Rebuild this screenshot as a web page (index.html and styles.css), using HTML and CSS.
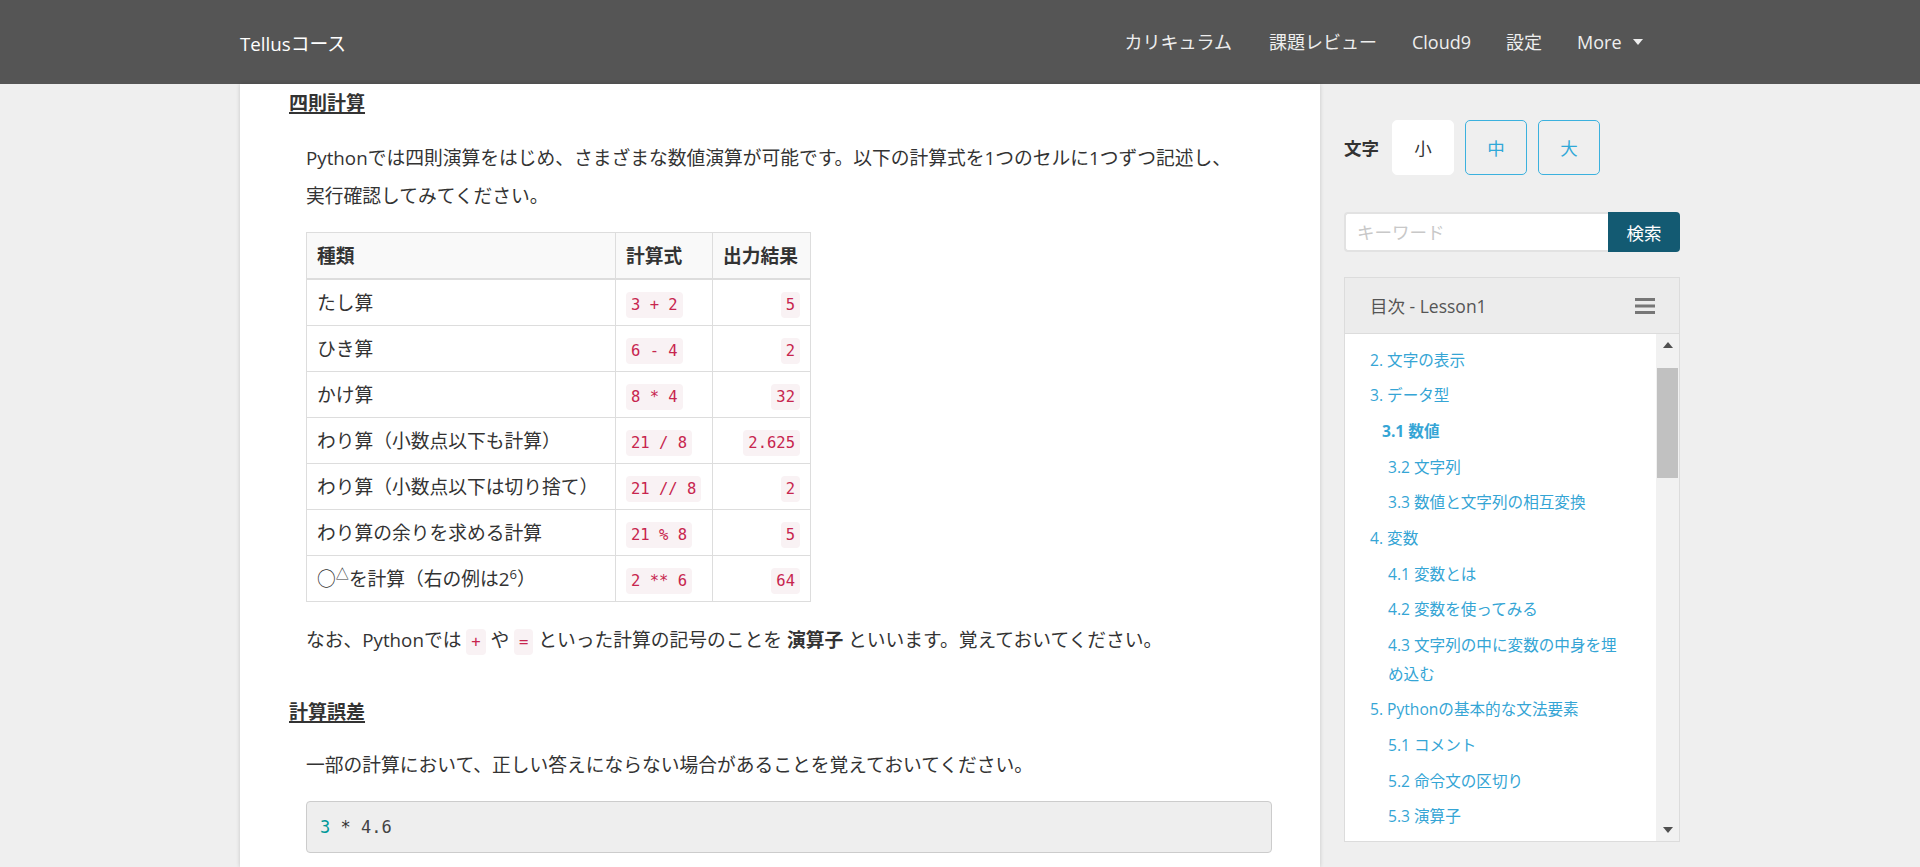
FILE: index.html
```html
<!DOCTYPE html>
<html lang="ja">
<head>
<meta charset="utf-8">
<title>Tellusコース</title>
<link rel="stylesheet" href="styles.css">
</head>
<body>
<header class="navbar">
  <div class="nav-inner">
    <a class="brand" href="#">Tellusコース</a>
    <ul class="nav">
      <li><a href="#">カリキュラム</a></li>
      <li><a href="#">課題レビュー</a></li>
      <li><a href="#">Cloud9</a></li>
      <li><a href="#">設定</a></li>
      <li><a href="#">More<span class="caret"></span></a></li>
    </ul>
  </div>
</header>
<div class="page">
  <main class="content">
    <h4 class="sec-title">四則計算</h4>
    <p class="text">Pythonでは四則演算をはじめ、さまざまな数値演算が可能です。以下の計算式を1つのセルに1つずつ記述し、<br>実行確認してみてください。</p>
    <table class="calc">
      <colgroup><col class="c1"><col class="c2"><col class="c3"></colgroup>
      <thead>
        <tr><th>種類</th><th>計算式</th><th>出力結果</th></tr>
      </thead>
      <tbody>
        <tr><td>たし算</td><td><code>3 + 2</code></td><td class="num"><code>5</code></td></tr>
        <tr><td>ひき算</td><td><code>6 - 4</code></td><td class="num"><code>2</code></td></tr>
        <tr><td>かけ算</td><td><code>8 * 4</code></td><td class="num"><code>32</code></td></tr>
        <tr><td>わり算（小数点以下も計算）</td><td><code>21 / 8</code></td><td class="num"><code>2.625</code></td></tr>
        <tr><td>わり算（小数点以下は切り捨て）</td><td><code>21 // 8</code></td><td class="num"><code>2</code></td></tr>
        <tr><td>わり算の余りを求める計算</td><td><code>21 % 8</code></td><td class="num"><code>5</code></td></tr>
        <tr><td>○<sup>△</sup>を計算（右の例は2<sup>6</sup>）</td><td><code>2 ** 6</code></td><td class="num"><code>64</code></td></tr>
      </tbody>
    </table>
    <p class="text after-table">なお、Pythonでは <code>+</code> や <code>=</code> といった計算の記号のことを <strong>演算子</strong> といいます。覚えておいてください。</p>
    <h4 class="sec-title second">計算誤差</h4>
    <p class="text after-title">一部の計算において、正しい答えにならない場合があることを覚えておいてください。</p>
    <pre class="codeblock"><span class="n">3</span> * <span class="f">4.6</span></pre>
  </main>
  <aside class="sidebar">
    <div class="fontsize">
      <span class="fs-label">文字</span>
      <button class="fs-btn active">小</button>
      <button class="fs-btn">中</button>
      <button class="fs-btn">大</button>
    </div>
    <form class="search">
      <input class="search-input" type="text" placeholder="キーワード">
      <button class="search-btn" type="button">検索</button>
    </form>
    <div class="toc">
      <div class="toc-head">
        <span class="toc-title">目次 - Lesson1</span>
        <svg class="burger" width="20" height="16" viewBox="0 0 20 16"><rect x="0" y="0" width="20" height="3" fill="#777"/><rect x="0" y="6.5" width="20" height="3" fill="#777"/><rect x="0" y="13" width="20" height="3" fill="#777"/></svg>
      </div>
      <div class="toc-body">
        <ul class="toc-list">
          <li class="l1">2. 文字の表示</li>
          <li class="l1">3. データ型</li>
          <li class="l2 active">3.1 数値</li>
          <li class="l2">3.2 文字列</li>
          <li class="l2">3.3 数値と文字列の相互変換</li>
          <li class="l1">4. 変数</li>
          <li class="l2">4.1 変数とは</li>
          <li class="l2">4.2 変数を使ってみる</li>
          <li class="l2">4.3 文字列の中に変数の中身を埋め込む</li>
          <li class="l1">5. Pythonの基本的な文法要素</li>
          <li class="l2">5.1 コメント</li>
          <li class="l2">5.2 命令文の区切り</li>
          <li class="l2">5.3 演算子</li>
        </ul>
        <div class="scrollbar">
          <div class="sb-btn"><span class="tri-up"></span></div>
          <div class="sb-thumb"></div>
          <div class="sb-btn bottom"><span class="tri-down"></span></div>
        </div>
      </div>
    </div>
  </aside>
</div>
</body>
</html>
```
FILE: styles.css
```css
* { box-sizing: border-box; }
html, body { margin: 0; padding: 0; }
body {
  background: #efefef;
  color: #333;
  font-family: "Open Sans", "Noto Sans CJK JP", sans-serif;
  height: 867px;
  overflow: hidden;
}
a { text-decoration: none; color: inherit; }

/* navbar */
.navbar {
  height: 84px;
  background: #555555;
}
.nav-inner {
  width: 1440px;
  height: 84px;
  margin: 0 auto;
  display: flex;
  align-items: center;
  justify-content: space-between;
  padding-right: 20px;
}
.brand {
  color: #fff;
  font-size: 18.75px;
}
.nav {
  display: flex;
  list-style: none;
  margin: 0;
  padding: 0;
}
.nav li a {
  display: flex;
  align-items: center;
  padding: 0 17.5px;
  color: #eee;
  font-size: 18px;
  line-height: 84px;
}
.nav li:first-child a { padding-right: 19.5px; }
.caret {
  display: inline-block;
  width: 0;
  height: 0;
  margin-left: 11px;
  border-top: 6px solid #eee;
  border-left: 5px solid transparent;
  border-right: 5px solid transparent;
}

/* layout */
.page {
  width: 1440px;
  height: 783px;
  margin: 0 auto;
  display: flex;
}
.content {
  width: 1080px;
  flex: none;
  background: #fff;
  box-shadow: 0 0 4px rgba(0, 0, 0, 0.18);
  padding: 9px 48px 0 49px;
}

.sec-title {
  margin: 0;
  font-size: 19px;
  line-height: 21px;
  font-weight: bold;
  text-decoration: underline;
  text-decoration-thickness: 1.5px;
  text-underline-offset: 2px;
  color: #333;
}
.sec-title.second { margin-top: 42.5px; }

.text {
  margin: 25px 0 0 17px;
  font-size: 18.75px;
  line-height: 38px;
}
.text.after-table { margin-top: 19px; }
.text.after-title { margin-top: 23.5px; }
.text strong { font-weight: bold; }

code {
  font-family: "DejaVu Sans Mono", monospace;
  font-size: 15.5px;
  line-height: 1;
  color: #c7254e;
  background: #f9f2f4;
  border-radius: 4px;
  padding: 4px 5px;
}

/* table */
.calc {
  margin: 17px 0 0 17px;
  border-collapse: collapse;
  table-layout: fixed;
  width: 504px;
}
.calc .c1 { width: 309px; }
.calc .c2 { width: 97px; }
.calc .c3 { width: 98px; }
.calc th, .calc td {
  border: 1px solid #ddd;
  padding: 10px;
  font-size: 18.75px;
  line-height: 25px;
  height: 46px;
  text-align: left;
  white-space: nowrap;
}
.calc th {
  background: #f9f9f9;
  font-weight: bold;
  border-bottom: 2px solid #ddd;
}
.calc td.num { text-align: right; }
.calc sup {
  font-size: 70%;
  line-height: 0;
  vertical-align: 0.55em;
}

/* code block */
.codeblock {
  margin: 17px 0 0 17px;
  padding: 13px;
  border: 1px solid #ccc;
  border-radius: 4px;
  background: #eeeeee;
  font-family: "DejaVu Sans Mono", monospace;
  font-size: 17px;
  line-height: 24px;
  color: #333;
}
.codeblock .n { color: #099; }
.codeblock .f { color: #444; }

/* sidebar */
.sidebar {
  width: 360px;
  flex: none;
  padding: 36px 0 0 24px;
}
.fontsize {
  display: flex;
  align-items: center;
}
.fs-label {
  font-size: 17.5px;
  font-weight: bold;
  margin-right: 13px;
}
.fs-btn {
  width: 62px;
  height: 55px;
  margin-right: 11px;
  border: 1px solid #3bb1de;
  border-radius: 5px;
  background: transparent;
  color: #2fa8d8;
  font-family: "Open Sans", "Noto Sans CJK JP", sans-serif;
  font-size: 17.5px;
  padding: 0;
}
.fs-btn.active {
  background: #fff;
  border-color: #fff;
  color: #333;
}

.search {
  margin: 37px 0 0 0;
  display: flex;
  height: 40px;
}
.search-input {
  flex: 1;
  min-width: 0;
  height: 40px;
  border: 2px solid #e2e2e2;
  border-right: none;
  border-radius: 4px 0 0 4px;
  background: #fff;
  padding: 0 11px;
  font-family: "Open Sans", "Noto Sans CJK JP", sans-serif;
  font-size: 17.5px;
  color: #333;
}
.search-input::placeholder { color: #c8c8c8; }
.search-btn {
  width: 72px;
  height: 40px;
  border: none;
  border-radius: 0 4px 4px 0;
  background: #135a72;
  color: #fff;
  font-family: "Open Sans", "Noto Sans CJK JP", sans-serif;
  font-size: 17.5px;
  padding: 0;
}

.toc {
  margin-top: 25px;
  border: 1px solid #dcdcdc;
  background: #fff;
}
.toc-head {
  height: 56px;
  background: #ececec;
  border-bottom: 1px solid #dcdcdc;
  display: flex;
  align-items: center;
  justify-content: space-between;
  padding: 0 24px 0 25px;
}
.toc-title {
  font-size: 17.5px;
  color: #555;
}
.burger { display: block; }

.toc-body {
  height: 507px;
  display: flex;
}
.toc-list {
  flex: 1;
  list-style: none;
  margin: 0;
  padding: 8px 30px 0 25px;
  overflow: hidden;
}
.toc-list li {
  font-size: 15.6px;
  line-height: 28.5px;
  padding: 3.6px 0;
  color: #35a5d5;
}
.toc-list li.l2 { padding-left: 18px; }
.toc-list li.active {
  padding-left: 12px;
  font-weight: bold;
}

.scrollbar {
  width: 23px;
  flex: none;
  background: #f1f1f1;
  display: flex;
  flex-direction: column;
}
.sb-btn {
  height: 22px;
  display: flex;
  align-items: center;
  justify-content: center;
}
.sb-btn.bottom { margin-top: auto; }
.tri-up, .tri-down {
  width: 0;
  height: 0;
  border-left: 5.5px solid transparent;
  border-right: 5.5px solid transparent;
}
.tri-up { border-bottom: 6px solid #505050; }
.tri-down { border-top: 6px solid #505050; }
.sb-thumb {
  height: 110px;
  margin: 12px 1px 0 1px;
  background: #c1c1c1;
}
```
